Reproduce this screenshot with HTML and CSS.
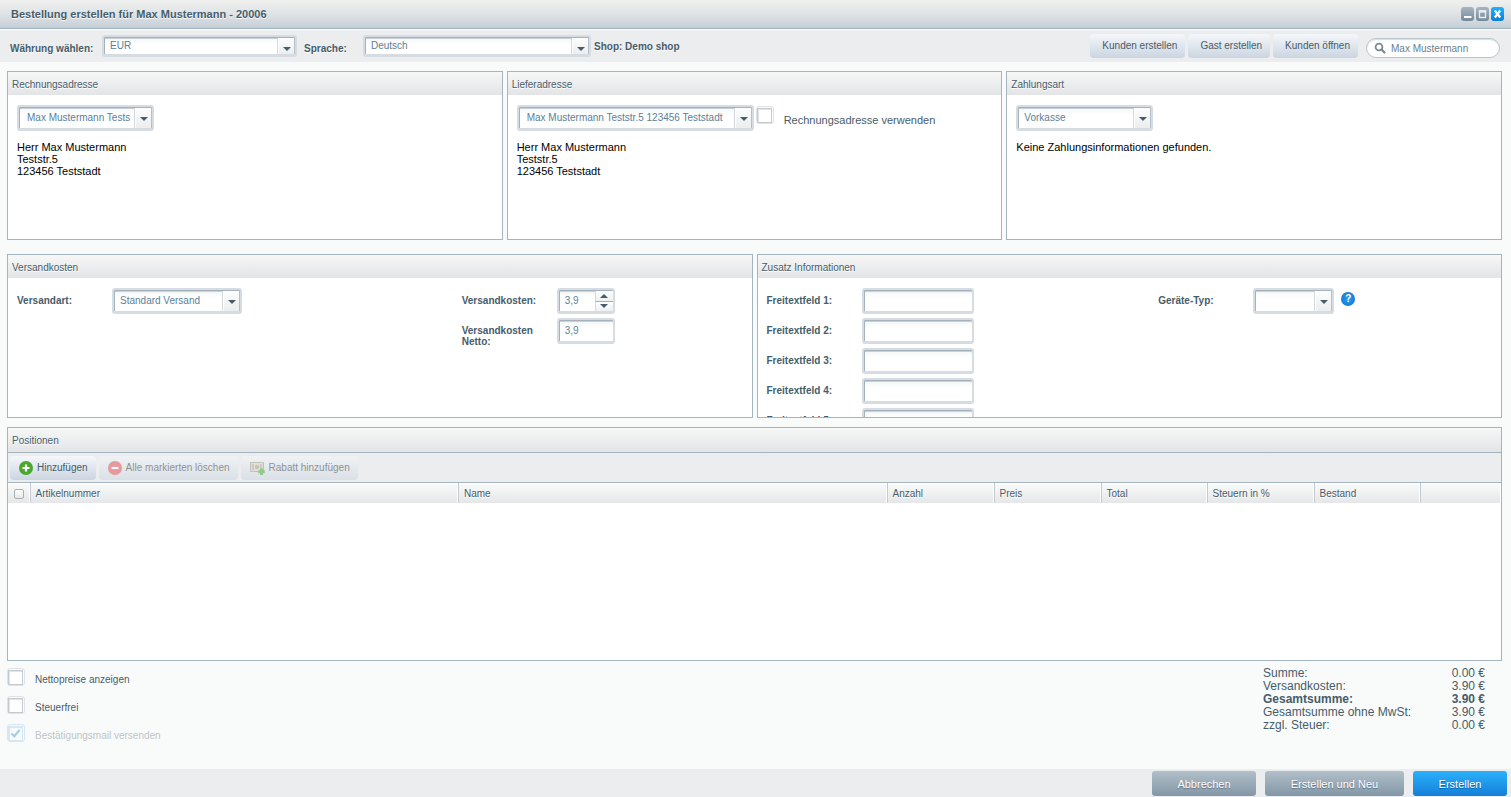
FILE: index.html
```html
<!DOCTYPE html>
<html lang="de">
<head>
<meta charset="utf-8">
<title>Bestellung erstellen</title>
<link rel="stylesheet" href="styles.css">
</head>
<body>
<header class="titlebar">
  <h1 class="title">Bestellung erstellen für Max Mustermann - 20006</h1>
  <div class="tools">
    <button class="tool" type="button" aria-label="Minimieren"><svg width="13" height="14" viewBox="0 0 13 14"><path d="M3 9h7.500v2H3z" fill="#fff"/></svg></button>
    <button class="tool" type="button" aria-label="Maximieren"><svg width="13" height="14" viewBox="0 0 13 14"><path d="M3.500 4.500h6v6h-6z" fill="none" stroke="#e6ebef" stroke-width="1.400"/><path d="M2.800 3h7.400v2.500H2.800z" fill="#e6ebef"/></svg></button>
    <button class="tool tool-close" type="button" aria-label="Schließen"><svg width="13" height="14" viewBox="0 0 13 14"><path d="M3.800 3.500l5.400 7M9.200 3.500l-5.400 7" stroke="#fff" stroke-width="2.300"/></svg></button>
  </div>
</header>

<div class="toolbar">
  <label class="label low currency-label" for="currency">Währung wählen:</label>
  <span class="combo flat currency"><select id="currency"><option>EUR</option></select></span>
  <label class="label low language-label" for="language">Sprache:</label>
  <span class="combo flat language"><select id="language"><option>Deutsch</option></select></span>
  <span class="label shop">Shop: Demo shop</span>
  <div class="actions">
    <button class="btn" type="button">Kunden erstellen</button>
    <button class="btn" type="button">Gast erstellen</button>
    <button class="btn" type="button">Kunden öffnen</button>
  </div>
  <label class="search">
    <svg width="12" height="12" viewBox="0 0 12 12" fill="none" stroke="#7c8891"><circle cx="5" cy="5" r="3.400" stroke-width="1.800"/><path d="M7.500 7.500l3 3" stroke-width="2.200" stroke-linecap="round"/></svg>
    <input type="text" value="Max Mustermann" aria-label="Kunde suchen">
  </label>
</div>

<main class="content">
  <div class="row three">
    <section class="panel">
      <h2 class="panel-head">Rechnungsadresse</h2>
      <div class="panel-body">
        <div class="line"><span class="combo address indent"><select aria-label="Rechnungsadresse"><option>Max Mustermann Tests</option></select></span></div>
        <p class="text">Herr Max Mustermann<br>Teststr.5<br>123456 Teststadt</p>
      </div>
    </section>
    <section class="panel">
      <h2 class="panel-head">Lieferadresse</h2>
      <div class="panel-body">
        <div class="line">
          <span class="combo delivery indent"><select aria-label="Lieferadresse"><option>Max Mustermann Teststr.5 123456 Teststadt</option></select></span>
          <input class="check" type="checkbox" id="same">
          <label class="same-label" for="same">Rechnungsadresse verwenden</label>
        </div>
        <p class="text">Herr Max Mustermann<br>Teststr.5<br>123456 Teststadt</p>
      </div>
    </section>
    <section class="panel">
      <h2 class="panel-head">Zahlungsart</h2>
      <div class="panel-body">
        <div class="line"><span class="combo address"><select aria-label="Zahlungsart"><option>Vorkasse</option></select></span></div>
        <p class="text">Keine Zahlungsinformationen gefunden.</p>
      </div>
    </section>
  </div>

  <div class="row two">
    <section class="panel">
      <h2 class="panel-head">Versandkosten</h2>
      <div class="panel-body form shipping">
        <div class="column">
          <div class="field"><label class="label" for="method">Versandart:</label><span class="combo method"><select id="method"><option>Standard Versand</option></select></span></div>
        </div>
        <div class="column">
          <div class="field"><label class="label" for="cost">Versandkosten:</label>
            <span class="spinner"><input class="bare" id="cost" type="text" value="3,9"><span class="steps"><button type="button" class="step up" aria-label="Erhöhen"></button><button type="button" class="step down" aria-label="Verringern"></button></span></span></div>
          <div class="field"><label class="label" for="net">Versandkosten Netto:</label><input class="input short" id="net" type="text" value="3,9"></div>
        </div>
      </div>
    </section>
    <section class="panel">
      <h2 class="panel-head">Zusatz Informationen</h2>
      <div class="panel-body form extra">
        <div class="column">
          <div class="field"><label class="label" for="f1">Freitextfeld 1:</label><input class="input" id="f1" type="text"></div>
          <div class="field"><label class="label" for="f2">Freitextfeld 2:</label><input class="input" id="f2" type="text"></div>
          <div class="field"><label class="label" for="f3">Freitextfeld 3:</label><input class="input" id="f3" type="text"></div>
          <div class="field"><label class="label" for="f4">Freitextfeld 4:</label><input class="input" id="f4" type="text"></div>
          <div class="field"><label class="label" for="f5">Freitextfeld 5:</label><input class="input" id="f5" type="text"></div>
        </div>
        <div class="column">
          <div class="field"><label class="label" for="device">Geräte-Typ:</label><span class="combo device"><select id="device"><option></option></select></span><button class="help" type="button">?</button></div>
        </div>
      </div>
    </section>
  </div>

  <section class="panel positions">
    <h2 class="panel-head">Positionen</h2>
    <div class="grid-tools">
      <button class="btn icon-btn" type="button"><svg width="14" height="14" viewBox="0 0 14 14"><circle cx="7" cy="7" r="7" fill="#4aa82c"/><path d="M7 3.500v7M3.500 7h7" stroke="#fff" stroke-width="2.200"/></svg>Hinzufügen</button>
      <button class="btn icon-btn" type="button" disabled><svg width="14" height="14" viewBox="0 0 14 14"><circle cx="7" cy="7" r="7" fill="#e2464a"/><path d="M3.500 7h7" stroke="#fff" stroke-width="2.200"/></svg>Alle markierten löschen</button>
      <button class="btn icon-btn" type="button" disabled><svg width="15" height="14" viewBox="0 0 15 14"><path d="M.5 1.500h13v9H.5z" fill="#d9d2c0" stroke="#9b9482"/><path d="M2 3h2v6H2zM10 3h2v6h-2z" fill="#b3a98f"/><circle cx="7" cy="6" r="2.200" fill="#a59c84"/><path d="M11.500 7.500v6.500M8.200 10.800h6.600" stroke="#37a92f" stroke-width="3"/></svg>Rabatt hinzufügen</button>
    </div>
    <table class="grid">
      <colgroup><col class="c-check"><col><col><col class="c-num"><col class="c-num"><col class="c-tight"><col class="c-num"><col class="c-tight"><col class="c-end"></colgroup>
      <thead><tr>
        <th class="pick"><input class="mini" type="checkbox" aria-label="Alle auswählen"></th>
        <th>Artikelnummer</th><th>Name</th><th>Anzahl</th><th>Preis</th><th>Total</th><th>Steuern in %</th><th>Bestand</th><th></th>
      </tr></thead>
    </table>
  </section>

  <div class="summary">
    <div class="options">
      <div class="option"><input class="check" type="checkbox" id="o1"><label for="o1">Nettopreise anzeigen</label></div>
      <div class="option"><input class="check" type="checkbox" id="o2"><label for="o2">Steuerfrei</label></div>
      <div class="option"><input class="check" type="checkbox" id="o3" checked disabled><label for="o3">Bestätigungsmail versenden</label></div>
    </div>
    <table class="totals">
      <tbody>
        <tr><td>Summe:</td><td>0.00 €</td></tr>
        <tr><td>Versandkosten:</td><td>3.90 €</td></tr>
        <tr class="strong"><td>Gesamtsumme:</td><td>3.90 €</td></tr>
        <tr><td>Gesamtsumme ohne MwSt:</td><td>3.90 €</td></tr>
        <tr><td>zzgl. Steuer:</td><td>0.00 €</td></tr>
      </tbody>
    </table>
  </div>
</main>

<footer class="footer">
  <button class="big" type="button">Abbrechen</button>
  <button class="big wide" type="button">Erstellen und Neu</button>
  <button class="big primary" type="button">Erstellen</button>
</footer>
</body>
</html>
```

FILE: styles.css
```css
*, *::before, *::after { box-sizing: border-box; }

body {
  margin: 0;
  min-height: 100vh;
  display: flex;
  flex-direction: column;
  background: #f9fbfa;
  color: #475c6a;
  font: 10px/12px "Liberation Sans", Arial, sans-serif;
}

button, input, select { font: inherit; color: inherit; margin: 0; }
h1, h2, p { margin: 0; }

.titlebar {
  display: flex;
  align-items: center;
  justify-content: space-between;
  height: 29px;
  padding: 0 7px 0 11px;
  border-bottom: 1px solid #9fb2bf;
  background: linear-gradient(#f0f0ef, #dfe3e6 50%, #c5ced6);
}
.title { font-size: 11px; font-weight: bold; text-shadow: 0 1px 0 #fff; }
.tools { display: flex; gap: 2px; }
.tool {
  display: flex;
  width: 13px;
  height: 14px;
  padding: 0;
  border: 0;
  border-radius: 3px;
  background: linear-gradient(#a5b5c1, #76899a);
}
.tool-close { background: linear-gradient(#22b0fb, #0a7fd9); }

.toolbar {
  display: flex;
  align-items: center;
  height: 33px;
  padding: 0 11px 0 10px;
  border-top: 1px solid #fff;
  background: #ebedef;
}
.label { font-weight: bold; line-height: 11px; text-shadow: 0 1px 0 #fff; }
.low { padding-top: 4px; }
.currency-label { width: 92px; }
.language-label { width: 66px; padding-left: 7px; }
.shop { padding-left: 3px; }
.currency { width: 195px; }
.language { width: 228px; }
.actions { display: flex; gap: 3px; margin-left: auto; }

.btn {
  height: 24px;
  padding: 0 8px 0 12px;
  border: 0;
  border-radius: 4px;
  background: linear-gradient(#f5f7fa, #cbd5e1);
}
.icon-btn { display: flex; align-items: center; gap: 4px; padding: 0 8px 0 9px; }
.icon-btn:disabled { opacity: .5; color: #333; }

.search {
  display: flex;
  align-items: center;
  gap: 5px;
  width: 134px;
  height: 20px;
  margin: 4px 0 0 8px;
  padding: 0 7px;
  border: 1px solid #b9c5cd;
  border-radius: 10px;
  background: #fff;
  box-shadow: inset 0 1px 1px #d5dce1;
}
.search input {
  flex: 1;
  min-width: 0;
  padding: 1px 0 0;
  border: 0;
  background: none;
  color: #6b7f8d;
}

.content { flex: 1; display: flex; flex-direction: column; padding: 9px 9px 0 7px; }
.row { display: grid; gap: 4px; }
.three { grid-template-columns: repeat(3, 1fr); margin-bottom: 14px; }
.two { grid-template-columns: repeat(2, 1fr); margin-bottom: 9px; }
.three .panel { min-height: 169px; }
.two .panel { height: 164px; overflow: hidden; }

.panel { border: 1px solid #a4b5c0; background: #fff; }
.panel-head {
  height: 23px;
  padding: 0 4px;
  background: linear-gradient(#f7f7f7, #e2e4e6);
  font-size: 10px;
  font-weight: normal;
  line-height: 25px;
  text-shadow: 0 1px 0 #fff;
}
.panel-body { padding: 10px 0 0 9px; }
.line { display: flex; align-items: flex-start; margin-bottom: 10px; }
.text { color: #000; font-size: 11px; }

/* Framed fields: pale outer frame, darker inner top and left edge */
.combo, .spinner, .input {
  height: 26px;
  border: 2px solid #d6dce2;
  border-bottom-width: 3px;
  border-radius: 3px;
  background: linear-gradient(#f3f5f5, #fff 8px);
  box-shadow: inset 1px 1px 0 #a3b2bd, inset 0 2px 0 #c9d1d7;
  color: #5c8098;
}
.combo { position: relative; display: flex; }
.combo select {
  appearance: none;
  width: 100%;
  padding: 0 18px 0 6px;
  border: 0;
  background: none;
  outline: 0;
}
.combo::before {
  content: "";
  position: absolute;
  top: 1px;
  right: 0;
  bottom: 0;
  width: 18px;
  border-left: 1px solid #d3d9dd;
  background: linear-gradient(#fdfdfd, #ebedee);
  box-shadow: inset 1px 0 0 #fff, inset -1px 0 0 #b5c1ca;
}
.combo::after {
  content: "";
  position: absolute;
  top: 10px;
  right: 4px;
  border: 4px solid transparent;
  border-top-color: #475c6a;
  border-bottom-width: 0;
}
.flat { height: 22px; }
.indent select { padding-left: 8px; }
.address { width: 137px; }
.delivery { width: 237px; margin-right: 2px; }
.method { width: 130px; }
.device { width: 81px; }
.input { width: 112px; padding: 0 6px; outline: 0; }
.short { width: 58px; }

.spinner { display: flex; width: 58px; }
.bare { flex: 1; min-width: 0; padding: 0 0 0 6px; border: 0; background: none; outline: 0; }
.steps { display: flex; flex-direction: column; width: 18px; padding-top: 1px; }
.step {
  flex: 1;
  display: flex;
  align-items: center;
  justify-content: center;
  padding: 0;
  border: 0;
  border-left: 1px solid #d3d9dd;
  background: linear-gradient(#fdfdfd, #eef0f1);
}
.down { border-top: 1px solid #a3b2bd; }
.step::before { content: ""; border: 4px solid transparent; }
.up::before { border-bottom-color: #475c6a; border-top-width: 0; }
.down::before { border-top-color: #475c6a; border-bottom-width: 0; }

.form { display: grid; }
.shipping { grid-template-columns: 3fr 2fr; column-gap: 10px; }
.extra { grid-template-columns: 8fr 7fr; }
.column { display: flex; flex-direction: column; gap: 4px; }
.field { display: flex; align-items: flex-start; }
.field .label { width: 95px; padding-top: 7px; }
.help {
  width: 14px;
  height: 14px;
  margin: 4px 0 0 7px;
  padding: 0;
  border: 0;
  border-radius: 7px;
  background: radial-gradient(#2f9be8, #0a72cc);
  color: #fff;
  font-weight: bold;
}

.check {
  appearance: none;
  position: relative;
  flex: none;
  width: 18px;
  height: 18px;
  border: 1px solid #dfe3e6;
  border-radius: 3px;
  background: #fbfcfc;
}
.check::before {
  content: "";
  position: absolute;
  top: 1px;
  left: 0;
  width: 15px;
  height: 15px;
  border: 1px solid #c3cbd0;
  background: #fff;
  box-shadow: inset 1px 1px 1px #dfe3e6;
}
.check:disabled, .check:disabled::before { border-color: #d6e6f2; background: #f5fafd; }
.check:checked::after {
  content: "";
  position: absolute;
  top: 3px;
  left: 5px;
  width: 5px;
  height: 9px;
  border: solid #a9c9e0;
  border-width: 0 2px 2px 0;
  transform: rotate(40deg);
}
.line .check { margin-top: 1px; }
.same-label { padding: 9px 0 0 10px; font-size: 11px; }

.positions { flex: 1; }
.positions .panel-head { height: 24px; }
.grid-tools {
  display: flex;
  align-items: center;
  gap: 3px;
  height: 31px;
  padding: 0 2px;
  border: solid #a4b5c0;
  border-width: 1px 0;
  background: #ebedef;
}
.grid { width: 100%; table-layout: fixed; border-collapse: collapse; }
.c-check { width: 22px; }
.c-num { width: 107px; }
.c-tight { width: 106px; }
.c-end { width: 81px; }
.grid th {
  height: 20px;
  padding: 2px 5px 0;
  border-left: 1px solid #c3cbd0;
  background: linear-gradient(#fafafa, #e4e6e8);
  box-shadow: inset 0 1px 0 #fff, inset -1px 0 0 #fff;
  font-weight: normal;
  text-align: left;
  text-shadow: 0 1px 0 #fff;
}
.grid th.pick { padding: 2px 0 0; border-left: 0; text-align: center; }
.mini {
  appearance: none;
  display: inline-block;
  width: 10px;
  height: 10px;
  border: 1px solid #a9b0b4;
  border-radius: 2px;
  background: linear-gradient(#fff, #e6e6e6);
  vertical-align: -2px;
}

.summary {
  display: flex;
  align-items: flex-start;
  justify-content: space-between;
  padding: 6px 17px 27px 0;
}
.options { display: flex; flex-direction: column; gap: 10px; padding-top: 1px; }
.option { display: flex; gap: 10px; height: 18px; text-shadow: 0 1px 0 #fff; }
.option label { padding-top: 6px; }
.check:disabled + label { color: #bcc3c8; }
.totals { width: 222px; border-collapse: collapse; font-size: 12px; line-height: 13px; }
.totals td { padding: 0; }
.totals td:last-child { text-align: right; }
.strong { font-weight: bold; }

.footer {
  display: flex;
  justify-content: flex-end;
  gap: 9px;
  padding: 2px 4px 1px;
  background: #ebedef;
}
.big {
  min-width: 104px;
  height: 25px;
  border: 0;
  border-radius: 3px;
  background: linear-gradient(#b1bfc9, #8397a7);
  color: #fff;
  font-size: 11px;
  text-shadow: 0 1px 1px #5c6f7e;
}
.wide { min-width: 139px; }
.primary { min-width: 94px; background: linear-gradient(#2bb1fb, #157fd8); text-shadow: 0 1px 1px #0b5ca0; }
```
